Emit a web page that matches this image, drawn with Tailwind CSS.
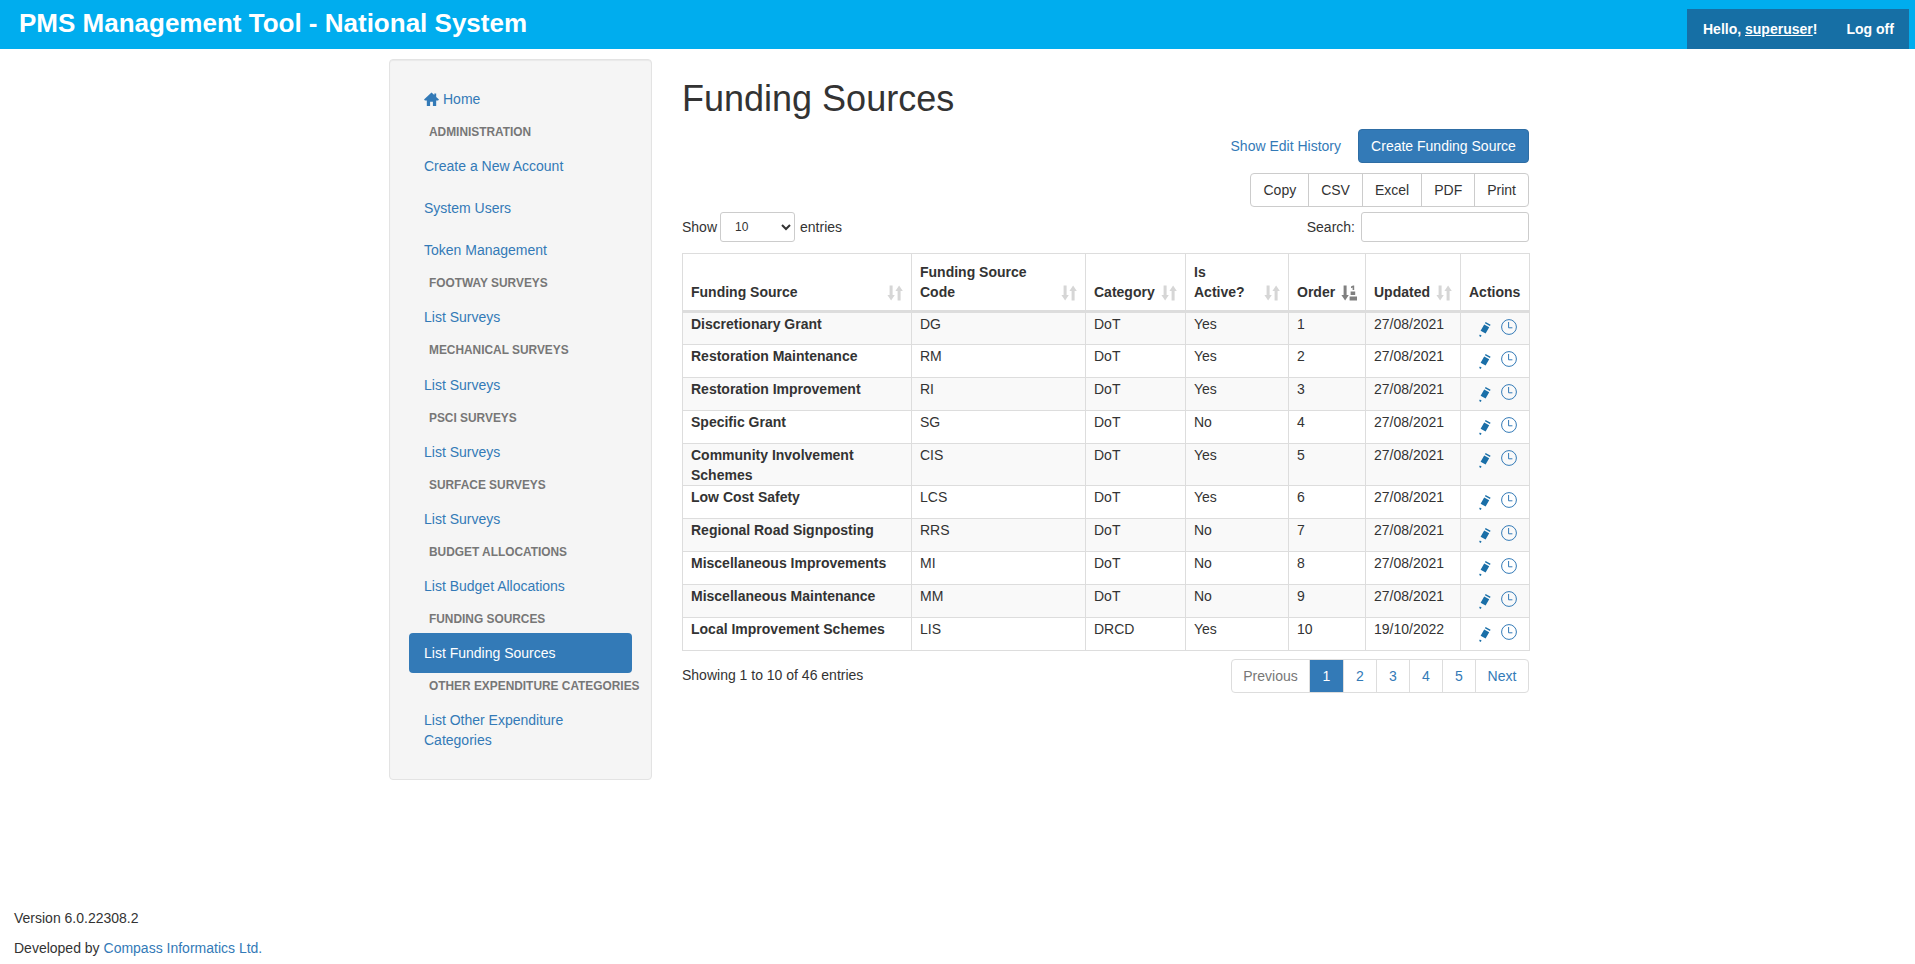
<!DOCTYPE html>
<html lang="en">
<head>
    <meta charset="UTF-8">
    <title>Funding Sources</title>
    <script src="https://cdn.jsdelivr.net/npm/@tailwindcss/browser@4"></script>
</head>
<body class="relative h-[964px] overflow-hidden bg-white font-['Liberation_Sans',Arial,sans-serif] text-sm leading-5 text-[#333]">
    <svg class="hidden">
        <symbol id="sort" viewBox="0 0 16 16"><path d="M2.6 .5h3v9.5h2.2L4.1 15.5.4 10h2.2zM10.6 15.5V6H8.4L12.1 .5 15.8 6h-2.2v9.5z"/></symbol>
        <symbol id="sort-order" viewBox="0 0 16 16"><path d="M2.6 .5h3v9.5h2.2L4.1 15.5.4 10h2.2z"/><path d="M10 1.6l2-1.1h1.2v4.4h-1.6V2.6l-1.6.6zM9.6 6.4h4.6v3.6H9.6zM8.6 11.4H16v4.1H8.6z"/></symbol>
        <symbol id="pencil" viewBox="0 0 12 15"><path d="M6.6 0l5 2.7-.7 1.3-5-2.7zM5.2 2.4l5 2.8-3.6 6.4-5-2.8zM.8 12.6l1.8 1-.9 1.3-1.5-.8z"/></symbol>
        <symbol id="clock" viewBox="0 0 16 16"><circle cx="8" cy="8" r="7.4" fill="none" stroke="currentColor" stroke-width="1"/><path d="M7.6 3v5.8h3.8" fill="none" stroke="currentColor" stroke-width="1"/></symbol>
    </svg>

    <header class="flex h-[49px] items-start justify-between bg-[#00adee] pr-[6px]">
        <div class="pl-[19px] pt-[7px] text-[26px] leading-[32px] font-bold text-white">PMS Management Tool - National System</div>
        <div class="mt-[9px] flex h-[40px] w-[222px] items-center gap-[29px] bg-[#166fa5] pl-[16px] text-sm font-bold text-white">
            <span>Hello, <a href="#" class="underline">superuser</a>!</span>
            <a href="#">Log off</a>
        </div>
    </header>

    <div class="flex pl-[389px] pt-[10px]">
        <aside class="h-[721px] w-[263px] shrink-0 rounded border border-[#e3e3e3] bg-[#f5f5f5] p-[19px] shadow-[inset_0_1px_1px_rgba(0,0,0,0.05)]">
            <nav class="flex flex-col text-[#337ab7]">
                <a href="#" class="flex items-center px-[15px] py-[10px]"><svg class="mr-[4px] h-[15px] w-[15px]" viewBox="0 0 16 16" fill="#337ab7"><path d="M8 .5L0 8l1 1h2v6h3.5v-4.5h3V15H13V9h2l1-1-3-2.8V1.5h-2v1.8z"/></svg>Home</a>
                <div class="h-[25.2px] pl-[20px] pt-[3px] text-[11.9px] leading-5 font-bold whitespace-nowrap text-[#777]">ADMINISTRATION</div>
                <a href="#" class="mt-[2px] px-[15px] py-[10px]">Create a New Account</a>
                <a href="#" class="mt-[2px] px-[15px] py-[10px]">System Users</a>
                <a href="#" class="mt-[2px] px-[15px] py-[10px]">Token Management</a>
                <div class="h-[25.2px] pl-[20px] pt-[3px] text-[11.9px] leading-5 font-bold whitespace-nowrap text-[#777]">FOOTWAY SURVEYS</div>
                <a href="#" class="mt-[2px] px-[15px] py-[10px]">List Surveys</a>
                <div class="h-[25.2px] pl-[20px] pt-[3px] text-[11.9px] leading-5 font-bold whitespace-nowrap text-[#777]">MECHANICAL SURVEYS</div>
                <a href="#" class="mt-[2px] px-[15px] py-[10px]">List Surveys</a>
                <div class="h-[25.2px] pl-[20px] pt-[3px] text-[11.9px] leading-5 font-bold whitespace-nowrap text-[#777]">PSCI SURVEYS</div>
                <a href="#" class="mt-[2px] px-[15px] py-[10px]">List Surveys</a>
                <div class="h-[25.2px] pl-[20px] pt-[3px] text-[11.9px] leading-5 font-bold whitespace-nowrap text-[#777]">SURFACE SURVEYS</div>
                <a href="#" class="mt-[2px] px-[15px] py-[10px]">List Surveys</a>
                <div class="h-[25.2px] pl-[20px] pt-[3px] text-[11.9px] leading-5 font-bold whitespace-nowrap text-[#777]">BUDGET ALLOCATIONS</div>
                <a href="#" class="mt-[2px] px-[15px] py-[10px]">List Budget Allocations</a>
                <div class="h-[25.2px] pl-[20px] pt-[3px] text-[11.9px] leading-5 font-bold whitespace-nowrap text-[#777]">FUNDING SOURCES</div>
                <a href="#" class="mt-[2px] rounded bg-[#337ab7] px-[15px] py-[10px] text-white">List Funding Sources</a>
                <div class="h-[25.2px] pl-[20px] pt-[3px] text-[11.9px] leading-5 font-bold whitespace-nowrap text-[#777]">OTHER EXPENDITURE CATEGORIES</div>
                <a href="#" class="mt-[1px] px-[15px] py-[10px]">List Other Expenditure Categories</a>
            </nav>
        </aside>

        <main class="ml-[30px] w-[847px]">
            <h1 class="pt-[20px] text-[36px] leading-[40px] font-normal">Funding Sources</h1>

            <div class="mt-[10px] flex h-[34px] items-center justify-end">
                <a href="#" class="mr-[17px] text-[#337ab7]">Show Edit History</a>
                <a href="#" class="flex h-[34px] w-[171px] items-center justify-center rounded border border-[#2e6da4] bg-[#337ab7] text-white">Create Funding Source</a>
            </div>

            <div class="mt-[10px] flex justify-end">
                <div class="flex h-[34px] divide-x divide-[#ccc] rounded border border-[#ccc] bg-white">
                    <span class="px-[12px] leading-8">Copy</span>
                    <span class="px-[12px] leading-8">CSV</span>
                    <span class="px-[12px] leading-8">Excel</span>
                    <span class="px-[12px] leading-8">PDF</span>
                    <span class="px-[12px] leading-8">Print</span>
                </div>
            </div>

            <div class="mt-[5px] flex h-[30px] items-center justify-between">
                <div class="flex items-center">
                    Show
                    <select class="ml-[3px] mr-[5px] h-[30px] w-[75px] rounded-[3px] border border-[#ccc] bg-white px-[10px] text-xs"><option>10</option></select>
                    entries
                </div>
                <div class="flex items-center">
                    Search:
                    <input type="search" class="ml-[6px] h-[30px] w-[168px] rounded-[3px] border border-[#ccc] bg-white">
                </div>
            </div>

            <table class="mt-[11px] w-[847px] table-fixed border-collapse">
                <colgroup>
                    <col class="w-[229px]"><col class="w-[174px]"><col class="w-[100px]"><col class="w-[103px]"><col class="w-[77px]"><col class="w-[95px]"><col class="w-[69px]">
                </colgroup>
                <thead>
                    <tr class="h-[58px] [&>th]:border [&>th]:border-b-[3px] [&>th]:border-[#ddd] [&>th]:px-[8px] [&>th]:pb-[8px] [&>th]:text-left [&>th]:align-bottom [&>th]:font-bold">
                        <th><div class="flex items-end justify-between">Funding Source<svg class="mb-[1px] h-[16px] w-[16px] shrink-0 fill-[#d6d6d6]"><use href="#sort"/></svg></div></th>
                        <th><div class="flex items-end justify-between"><span>Funding Source<br>Code</span><svg class="mb-[1px] h-[16px] w-[16px] shrink-0 fill-[#d6d6d6]"><use href="#sort"/></svg></div></th>
                        <th><div class="flex items-end justify-between">Category<svg class="mb-[1px] h-[16px] w-[16px] shrink-0 fill-[#d6d6d6]"><use href="#sort"/></svg></div></th>
                        <th><div class="flex items-end justify-between"><span>Is<br>Active?</span><svg class="mb-[1px] h-[16px] w-[16px] shrink-0 fill-[#d6d6d6]"><use href="#sort"/></svg></div></th>
                        <th><div class="flex items-end justify-between">Order<svg class="mb-[1px] h-[16px] w-[16px] shrink-0 fill-[#808080]"><use href="#sort-order"/></svg></div></th>
                        <th><div class="flex items-end justify-between">Updated<svg class="mb-[1px] h-[16px] w-[16px] shrink-0 fill-[#d6d6d6]"><use href="#sort"/></svg></div></th>
                        <th>Actions</th>
                    </tr>
                </thead>
                <tbody class="[&_td]:border [&_td]:border-[#ddd] [&_td]:px-[8px] [&_td]:pt-[1px] [&_td]:align-top [&_tr:nth-child(odd)]:bg-[#f9f9f9] [&_td:first-child]:font-bold">
                    <tr class="h-[33px]"><td>Discretionary Grant</td><td>DG</td><td>DoT</td><td>Yes</td><td>1</td><td>27/08/2021</td><td><div class="flex items-start pl-[10px] pt-[5px] text-[#337ab7]"><svg class="mt-[3px] h-[15px] w-[12px] fill-[#1a6fa8]"><use href="#pencil"/></svg><svg class="ml-[10px] h-[16px] w-[16px]"><use href="#clock"/></svg></div></td></tr>
                    <tr class="h-[33px]"><td>Restoration Maintenance</td><td>RM</td><td>DoT</td><td>Yes</td><td>2</td><td>27/08/2021</td><td><div class="flex items-start pl-[10px] pt-[5px] text-[#337ab7]"><svg class="mt-[3px] h-[15px] w-[12px] fill-[#1a6fa8]"><use href="#pencil"/></svg><svg class="ml-[10px] h-[16px] w-[16px]"><use href="#clock"/></svg></div></td></tr>
                    <tr class="h-[33px]"><td>Restoration Improvement</td><td>RI</td><td>DoT</td><td>Yes</td><td>3</td><td>27/08/2021</td><td><div class="flex items-start pl-[10px] pt-[5px] text-[#337ab7]"><svg class="mt-[3px] h-[15px] w-[12px] fill-[#1a6fa8]"><use href="#pencil"/></svg><svg class="ml-[10px] h-[16px] w-[16px]"><use href="#clock"/></svg></div></td></tr>
                    <tr class="h-[33px]"><td>Specific Grant</td><td>SG</td><td>DoT</td><td>No</td><td>4</td><td>27/08/2021</td><td><div class="flex items-start pl-[10px] pt-[5px] text-[#337ab7]"><svg class="mt-[3px] h-[15px] w-[12px] fill-[#1a6fa8]"><use href="#pencil"/></svg><svg class="ml-[10px] h-[16px] w-[16px]"><use href="#clock"/></svg></div></td></tr>
                    <tr class="h-[42px]"><td>Community Involvement Schemes</td><td>CIS</td><td>DoT</td><td>Yes</td><td>5</td><td>27/08/2021</td><td><div class="flex items-start pl-[10px] pt-[5px] text-[#337ab7]"><svg class="mt-[3px] h-[15px] w-[12px] fill-[#1a6fa8]"><use href="#pencil"/></svg><svg class="ml-[10px] h-[16px] w-[16px]"><use href="#clock"/></svg></div></td></tr>
                    <tr class="h-[33px]"><td>Low Cost Safety</td><td>LCS</td><td>DoT</td><td>Yes</td><td>6</td><td>27/08/2021</td><td><div class="flex items-start pl-[10px] pt-[5px] text-[#337ab7]"><svg class="mt-[3px] h-[15px] w-[12px] fill-[#1a6fa8]"><use href="#pencil"/></svg><svg class="ml-[10px] h-[16px] w-[16px]"><use href="#clock"/></svg></div></td></tr>
                    <tr class="h-[33px]"><td>Regional Road Signposting</td><td>RRS</td><td>DoT</td><td>No</td><td>7</td><td>27/08/2021</td><td><div class="flex items-start pl-[10px] pt-[5px] text-[#337ab7]"><svg class="mt-[3px] h-[15px] w-[12px] fill-[#1a6fa8]"><use href="#pencil"/></svg><svg class="ml-[10px] h-[16px] w-[16px]"><use href="#clock"/></svg></div></td></tr>
                    <tr class="h-[33px]"><td>Miscellaneous Improvements</td><td>MI</td><td>DoT</td><td>No</td><td>8</td><td>27/08/2021</td><td><div class="flex items-start pl-[10px] pt-[5px] text-[#337ab7]"><svg class="mt-[3px] h-[15px] w-[12px] fill-[#1a6fa8]"><use href="#pencil"/></svg><svg class="ml-[10px] h-[16px] w-[16px]"><use href="#clock"/></svg></div></td></tr>
                    <tr class="h-[33px]"><td>Miscellaneous Maintenance</td><td>MM</td><td>DoT</td><td>No</td><td>9</td><td>27/08/2021</td><td><div class="flex items-start pl-[10px] pt-[5px] text-[#337ab7]"><svg class="mt-[3px] h-[15px] w-[12px] fill-[#1a6fa8]"><use href="#pencil"/></svg><svg class="ml-[10px] h-[16px] w-[16px]"><use href="#clock"/></svg></div></td></tr>
                    <tr class="h-[33px]"><td>Local Improvement Schemes</td><td>LIS</td><td>DRCD</td><td>Yes</td><td>10</td><td>19/10/2022</td><td><div class="flex items-start pl-[10px] pt-[5px] text-[#337ab7]"><svg class="mt-[3px] h-[15px] w-[12px] fill-[#1a6fa8]"><use href="#pencil"/></svg><svg class="ml-[10px] h-[16px] w-[16px]"><use href="#clock"/></svg></div></td></tr>
                </tbody>
            </table>

            <div class="mt-[8px] flex items-start justify-between">
                <div class="pt-[6px]">Showing 1 to 10 of 46 entries</div>
                <div class="flex h-[34px] divide-x divide-[#ddd] rounded border border-[#ddd] bg-white text-[#337ab7]">
                    <span class="w-[78px] text-center leading-8 text-[#777]">Previous</span>
                    <span class="w-[34px] bg-[#337ab7] text-center leading-8 text-white">1</span>
                    <span class="w-[33px] text-center leading-8">2</span>
                    <span class="w-[33px] text-center leading-8">3</span>
                    <span class="w-[33px] text-center leading-8">4</span>
                    <span class="w-[33px] text-center leading-8">5</span>
                    <span class="w-[52px] text-center leading-8">Next</span>
                </div>
            </div>
        </main>
    </div>

    <footer class="absolute left-[14px] top-[908px]">
        <p class="h-[30px]">Version 6.0.22308.2</p>
        <p>Developed by <a href="#" class="text-[#337ab7]">Compass Informatics Ltd.</a></p>
    </footer>
</body>
</html>
